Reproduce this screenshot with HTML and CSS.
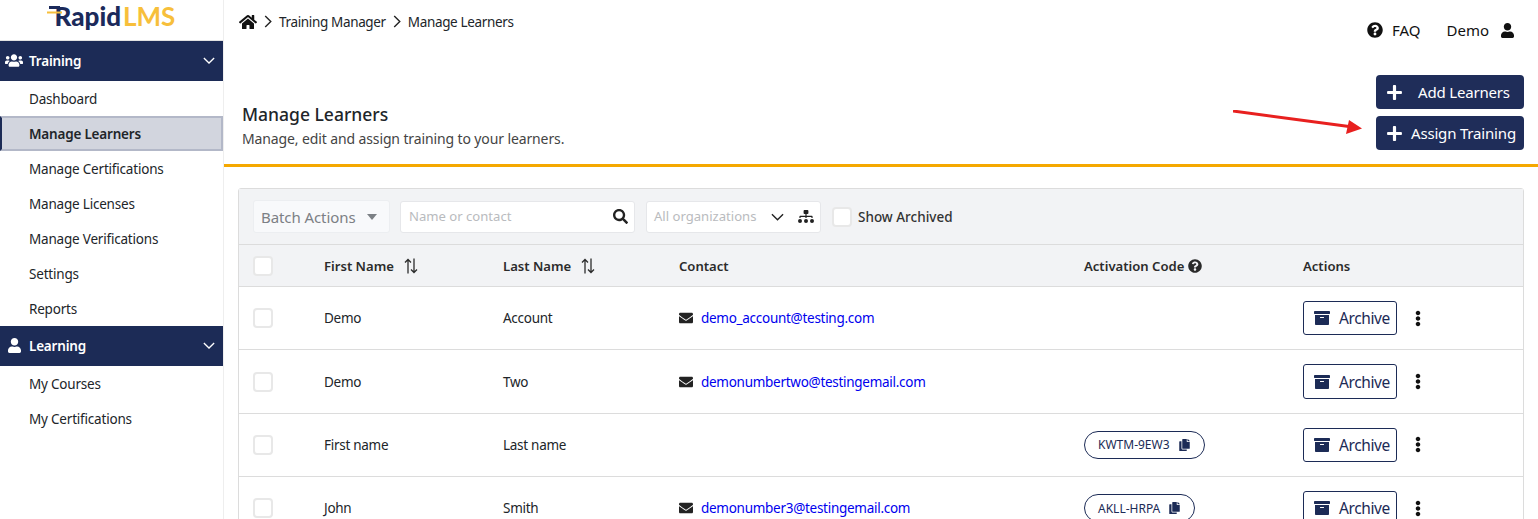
FILE: index.html
```html
<!DOCTYPE html>
<html lang="en">
<head>
<meta charset="utf-8">
<title>Manage Learners</title>
<link rel="stylesheet" href="styles.css">
</head>
<body>
<svg class="sprite" aria-hidden="true">
  <symbol id="i-home" viewBox="0 0 576 512"><path d="M280.37 148.26L96 300.11V464a16 16 0 0 0 16 16l112.06-.29a16 16 0 0 0 15.92-16V368a16 16 0 0 1 16-16h64a16 16 0 0 1 16 16v95.64a16 16 0 0 0 16 16.05L464 480a16 16 0 0 0 16-16V300L295.67 148.26a12.19 12.19 0 0 0-15.3 0zM571.6 251.47L488 182.56V44.05a12 12 0 0 0-12-12h-56a12 12 0 0 0-12 12v72.61L318.47 43a48 48 0 0 0-61 0L4.34 251.47a12 12 0 0 0-1.6 16.9l25.5 31A12 12 0 0 0 45.15 301l235.22-193.74a12.19 12.19 0 0 1 15.3 0L530.9 301a12 12 0 0 0 16.9-1.6l25.5-31a12 12 0 0 0-1.7-16.93z"/></symbol>
  <symbol id="i-user" viewBox="0 0 448 512"><path d="M224 256c70.7 0 128-57.3 128-128S294.7 0 224 0 96 57.3 96 128s57.3 128 128 128zm89.6 32h-16.7c-22.2 10.2-46.9 16-72.9 16s-50.6-5.8-72.9-16h-16.7C60.2 288 0 348.2 0 422.4V464c0 26.5 21.5 48 48 48h352c26.5 0 48-21.5 48-48v-41.6c0-74.2-60.2-134.4-134.4-134.4z"/></symbol>
  <symbol id="i-help" viewBox="0 0 512 512"><path d="M504 256c0 136.997-111.043 248-248 248S8 392.997 8 256C8 119.083 119.043 8 256 8s248 111.083 248 248zM262.655 90c-54.497 0-89.255 22.957-116.549 63.758-3.536 5.286-2.353 12.415 2.715 16.258l34.699 26.31c5.205 3.947 12.621 3.008 16.665-2.122 17.864-22.658 30.113-35.797 57.303-35.797 20.429 0 45.698 13.148 45.698 32.958 0 14.976-12.363 22.667-32.534 33.976C247.128 238.528 216 254.941 216 296v4c0 6.627 5.373 12 12 12h56c6.627 0 12-5.373 12-12v-1.333c0-28.462 83.186-29.647 83.186-106.667 0-58.002-60.165-102-116.531-102zM256 338c-25.365 0-46 20.635-46 46 0 25.364 20.635 46 46 46s46-20.636 46-46c0-25.365-20.635-46-46-46z"/></symbol>
  <symbol id="i-plus" viewBox="0 0 448 512"><path d="M416 208H272V64c0-17.67-14.33-32-32-32h-32c-17.67 0-32 14.33-32 32v144H32c-17.67 0-32 14.33-32 32v32c0 17.67 14.33 32 32 32h144v144c0 17.67 14.33 32 32 32h32c17.67 0 32-14.33 32-32V304h144c17.67 0 32-14.33 32-32v-32c0-17.67-14.33-32-32-32z"/></symbol>
  <symbol id="i-search" viewBox="0 0 512 512"><path d="M505 442.7L405.3 343c-4.5-4.5-10.6-7-17-7H372c27.6-35.3 44-79.7 44-128C416 93.1 322.9 0 208 0S0 93.1 0 208s93.1 208 208 208c48.3 0 92.7-16.4 128-44v16.3c0 6.4 2.5 12.5 7 17l99.7 99.7c9.4 9.4 24.6 9.4 33.9 0l28.3-28.3c9.4-9.4 9.4-24.6.1-34zM208 336c-70.7 0-128-57.2-128-128 0-70.7 57.2-128 128-128 70.7 0 128 57.2 128 128 0 70.7-57.2 128-128 128z"/></symbol>
  <symbol id="i-mail" viewBox="0 0 512 512"><path d="M502.3 190.8c3.9-3.1 9.7-.2 9.7 4.7V400c0 26.5-21.5 48-48 48H48c-26.5 0-48-21.5-48-48V195.6c0-5 5.7-7.8 9.7-4.7 22.4 17.4 52.1 39.5 154.1 113.6 21.1 15.4 56.7 47.8 92.2 47.6 35.7.3 72-32.8 92.3-47.6 102-74.1 131.6-96.3 154-113.7zM256 320c23.2.4 56.6-29.2 73.4-41.4 132.7-96.3 142.8-104.7 173.4-128.7 5.8-4.5 9.2-11.5 9.2-18.9v-19c0-26.5-21.5-48-48-48H48C21.5 64 0 85.5 0 112v19c0 7.4 3.4 14.3 9.2 18.9 30.6 23.9 40.7 32.4 173.4 128.7 16.8 12.2 50.2 41.8 73.4 41.4z"/></symbol>
  <symbol id="i-archive" viewBox="0 0 512 512"><path d="M32 448c0 17.7 14.3 32 32 32h384c17.7 0 32-14.3 32-32V160H32v288zm160-212c0-6.6 5.4-12 12-12h104c6.6 0 12 5.4 12 12v8c0 6.6-5.4 12-12 12H204c-6.6 0-12-5.4-12-12v-8zM480 32H32C14.3 32 0 46.3 0 64v48c0 8.8 7.2 16 16 16h480c8.8 0 16-7.2 16-16V64c0-17.7-14.3-32-32-32z"/></symbol>
  <symbol id="i-copy" viewBox="0 0 448 512"><path d="M320 448v40c0 13.255-10.745 24-24 24H24c-13.255 0-24-10.745-24-24V120c0-13.255 10.745-24 24-24h72v296c0 30.879 25.121 56 56 56h168zm0-344V0H152c-13.255 0-24 10.745-24 24v368c0 13.255 10.745 24 24 24h272c13.255 0 24-10.745 24-24V128H344c-13.2 0-24-10.8-24-24zm120.971-31.029L375.029 7.029A24 24 0 0 0 358.059 0H352v96h96v-6.059a24 24 0 0 0-7.029-16.97z"/></symbol>
  <symbol id="i-dots" viewBox="0 0 192 512"><path d="M96 184c39.8 0 72 32.2 72 72s-32.2 72-72 72-72-32.2-72-72 32.2-72 72-72zM24 80c0 39.8 32.2 72 72 72s72-32.2 72-72S135.800 8 96 8 24 40.200 24 80zm0 352c0 39.800 32.200 72 72 72s72-32.200 72-72-32.200-72-72-72-72 32.200-72 72z"/></symbol>
  <symbol id="i-users" viewBox="0 0 640 512"><path d="M96 224c35.300 0 64-28.700 64-64s-28.700-64-64-64-64 28.700-64 64 28.700 64 64 64zm448 0c35.300 0 64-28.700 64-64s-28.700-64-64-64-64 28.700-64 64 28.700 64 64 64zm32 32h-64c-17.600 0-33.500 7.100-45.100 18.600 40.300 22.100 68.900 62 75.100 109.400h66c17.700 0 32-14.300 32-32v-32c0-35.300-28.700-64-64-64zm-256 0c61.900 0 112-50.100 112-112S381.900 32 320 32 208 82.100 208 144s50.100 112 112 112zm76.800 32h-8.300c-20.800 10-43.900 16-68.500 16s-47.600-6-68.500-16h-8.300C179.600 288 128 339.600 128 403.200V432c0 26.500 21.500 48 48 48h288c26.500 0 48-21.500 48-48v-28.800c0-63.600-51.600-115.200-115.200-115.200zm-223.700-13.400C161.500 263.100 145.600 256 128 256H64c-35.300 0-64 28.700-64 64v32c0 17.700 14.300 32 32 32h65.900c6.300-47.400 34.900-87.300 75.200-109.400z"/></symbol>
  <symbol id="i-sitemap" viewBox="0 0 640 512"><path d="M80 352a80 80 0 1 0 0 160 80 80 0 0 0 0-160zm240 0a80 80 0 1 0 0 160 80 80 0 0 0 0-160zm240 0a80 80 0 1 0 0 160 80 80 0 0 0 0-160zM104 272h192v48h48v-48h192v48h48v-57.590c0-21.170-17.230-38.410-38.410-38.410H344v-64h40c17.670 0 32-14.330 32-32V32c0-17.670-14.330-32-32-32H256c-17.670 0-32 14.330-32 32v96c0 17.670 14.330 32 32 32h40v64H94.410C73.230 224 56 241.230 56 262.410V320h48z"/></symbol>
  <symbol id="i-down" viewBox="0 0 14 8"><path d="M1 1l6 6 6-6" fill="none" stroke="currentColor" stroke-width="1.500"/></symbol>
  <symbol id="i-right" viewBox="0 0 8 14"><path d="M1 1l6 6-6 6" fill="none" stroke="currentColor" stroke-width="1.500"/></symbol>
  <symbol id="i-sort" viewBox="0 0 14 16"><path d="M4 15.500V1.500M1 4.500l3-3 3 3M10 .5v14M7 11.500l3 3 3-3" fill="none" stroke="currentColor" stroke-width="1.300"/></symbol>
</svg>

<div class="app">
  <aside class="sidebar">
    <div class="logo">
      <svg class="logo-lines" viewBox="0 0 18 12"><path d="M3 2.500h11" stroke="#1b2a5b" stroke-width="3" fill="none"/><path d="M1 7.500h15" stroke="#f7bf3b" stroke-width="2" fill="none"/></svg>
      <span class="logo-rapid">Rapid</span><span class="logo-lms">LMS</span>
    </div>
    <div class="nav-head"><svg class="nav-icon-users"><use href="#i-users"/></svg><span class="nav-title">Training</span><svg class="nav-chev"><use href="#i-down"/></svg></div>
    <a class="nav-item">Dashboard</a>
    <a class="nav-item is-active">Manage Learners</a>
    <a class="nav-item">Manage Certifications</a>
    <a class="nav-item">Manage Licenses</a>
    <a class="nav-item">Manage Verifications</a>
    <a class="nav-item">Settings</a>
    <a class="nav-item">Reports</a>
    <div class="nav-head"><svg class="nav-icon-user"><use href="#i-user"/></svg><span class="nav-title">Learning</span><svg class="nav-chev"><use href="#i-down"/></svg></div>
    <a class="nav-item">My Courses</a>
    <a class="nav-item">My Certifications</a>
  </aside>

  <main class="main">
    <div class="top">
      <div class="top-left">
        <nav class="crumbs">
          <svg class="crumb-home"><use href="#i-home"/></svg>
          <svg class="crumb-sep"><use href="#i-right"/></svg>
          <span>Training Manager</span>
          <svg class="crumb-sep"><use href="#i-right"/></svg>
          <span>Manage Learners</span>
        </nav>
        <div class="page-head">
          <h1 class="page-title">Manage Learners</h1>
          <p class="page-sub">Manage, edit and assign training to your learners.</p>
        </div>
      </div>
      <div class="top-right">
        <div class="user-links">
          <span class="user-link"><svg class="ic-help"><use href="#i-help"/></svg>FAQ</span>
          <span class="user-link user-demo">Demo<svg class="ic-user"><use href="#i-user"/></svg></span>
        </div>
        <div class="head-btns">
          <button class="btn-primary btn-add"><svg class="ic-plus"><use href="#i-plus"/></svg>Add Learners</button>
          <button class="btn-primary btn-assign"><svg class="ic-plus"><use href="#i-plus"/></svg>Assign Training</button>
        </div>
      </div>
    </div>

    <svg class="arrow" viewBox="0 0 130 28"><path d="M0 1l116 15.500" stroke="#e8201f" stroke-width="3" fill="none"/><path d="M129 18.500L116 10l-3 14z" fill="#e8201f"/></svg>

    <section class="card">
      <div class="toolbar">
        <div class="batch">Batch Actions<span class="caret"></span></div>
        <div class="search"><span class="ph">Name or contact</span><svg class="ic-search"><use href="#i-search"/></svg></div>
        <div class="org"><span class="ph org-ph">All organizations</span><svg class="org-chev"><use href="#i-down"/></svg><svg class="ic-sitemap"><use href="#i-sitemap"/></svg></div>
        <label class="archived"><span class="check"></span>Show Archived</label>
      </div>

      <div class="row row-head">
        <div class="cell"><span class="check"></span></div>
        <div class="cell">First Name<svg class="ic-sort"><use href="#i-sort"/></svg></div>
        <div class="cell">Last Name<svg class="ic-sort"><use href="#i-sort"/></svg></div>
        <div class="cell">Contact</div>
        <div class="cell">Activation Code<svg class="ic-q"><use href="#i-help"/></svg></div>
        <div class="cell">Actions</div>
      </div>

      <div class="row">
        <div class="cell"><span class="check"></span></div>
        <div class="cell">Demo</div>
        <div class="cell">Account</div>
        <div class="cell"><svg class="ic-mail"><use href="#i-mail"/></svg><a class="mail">demo_account@testing.com</a></div>
        <div class="cell"></div>
        <div class="cell"><button class="btn-archive"><svg class="ic-archive"><use href="#i-archive"/></svg>Archive</button><svg class="ic-dots"><use href="#i-dots"/></svg></div>
      </div>
      <div class="row">
        <div class="cell"><span class="check"></span></div>
        <div class="cell">Demo</div>
        <div class="cell">Two</div>
        <div class="cell"><svg class="ic-mail"><use href="#i-mail"/></svg><a class="mail">demonumbertwo@testingemail.com</a></div>
        <div class="cell"></div>
        <div class="cell"><button class="btn-archive"><svg class="ic-archive"><use href="#i-archive"/></svg>Archive</button><svg class="ic-dots"><use href="#i-dots"/></svg></div>
      </div>
      <div class="row">
        <div class="cell"><span class="check"></span></div>
        <div class="cell">First name</div>
        <div class="cell">Last name</div>
        <div class="cell"></div>
        <div class="cell"><span class="code">KWTM-9EW3<svg class="ic-copy"><use href="#i-copy"/></svg></span></div>
        <div class="cell"><button class="btn-archive"><svg class="ic-archive"><use href="#i-archive"/></svg>Archive</button><svg class="ic-dots"><use href="#i-dots"/></svg></div>
      </div>
      <div class="row">
        <div class="cell"><span class="check"></span></div>
        <div class="cell">John</div>
        <div class="cell">Smith</div>
        <div class="cell"><svg class="ic-mail"><use href="#i-mail"/></svg><a class="mail">demonumber3@testingemail.com</a></div>
        <div class="cell"><span class="code">AKLL-HRPA<svg class="ic-copy"><use href="#i-copy"/></svg></span></div>
        <div class="cell"><button class="btn-archive"><svg class="ic-archive"><use href="#i-archive"/></svg>Archive</button><svg class="ic-dots"><use href="#i-dots"/></svg></div>
      </div>
    </section>
  </main>
</div>
</body>
</html>
```
FILE: styles.css
```css
* { box-sizing: border-box; }
html, body { margin: 0; height: 100%; overflow: hidden; }
body { font-family: "Noto Sans", "Open Sans", sans-serif; font-size: 14px; color: #212529; background: #fff; }
.sprite { display: none; }
svg { fill: currentColor; flex: none; }
.app { display: flex; height: 519px; overflow: hidden; }

.sidebar { width: 224px; flex: none; border-right: 1px solid #eeeeee; }
.logo { height: 41px; display: flex; align-items: center; justify-content: center; padding: 0 0 9px 7px; border-bottom: 1px solid #e2e2e2; font-family: "Lato", sans-serif; font-size: 26px; line-height: 30px; font-weight: 900; position: relative; overflow: hidden; }
.logo-lines { position: absolute; left: 46px; top: 5px; width: 18px; height: 12px; }
.logo-rapid { color: #1b2a5b; }
.logo-lms { color: #f7bf3b; font-weight: 700; margin-left: 2px; }
.nav-head { height: 40px; background: #1c2b56; color: #fff; display: flex; align-items: center; font-weight: 600; font-size: 13.5px; letter-spacing: -.2px; padding-bottom: 1px; }
.nav-icon-users { width: 18px; height: 15px; margin-left: 5px; margin-right: 6px; }
.nav-icon-user { width: 13px; height: 15px; margin-left: 8px; margin-right: 8px; }
.nav-title { flex: 1; }
.nav-chev { width: 12px; height: 7px; margin-right: 8px; }
.nav-item { display: flex; align-items: center; height: 35px; padding-left: 29px; font-size: 13.5px; letter-spacing: -.2px; color: #212529; }
.is-active { background: #d2d5de; font-weight: 600; padding-left: 27px; border: 2px solid #b3b8c8; border-left-color: #1c2b56; }

.main { flex: 1; min-width: 0; position: relative; }
.top { display: flex; justify-content: space-between; height: 167px; border-bottom: 3px solid #f5a800; padding-right: 14px; }
.top-left { padding-left: 15px; display: flex; flex-direction: column; }
.crumbs { display: flex; align-items: center; height: 44px; font-size: 13.5px; letter-spacing: -.35px; gap: 7px; padding-bottom: 1px; color: #212529; }
.crumb-home { width: 18px; height: 16px; color: #111; }
.crumb-sep { width: 8px; height: 13px; color: #222; }
.page-head { margin-top: 58px; padding-left: 3px; }
.page-title { margin: 0; font-size: 17.500px; line-height: 24px; font-weight: 500; color: #212529; }
.page-sub { margin: 3px 0 0; font-size: 14px; letter-spacing: -.12px; line-height: 20px; color: #444; }
.top-right { display: flex; flex-direction: column; align-items: flex-end; }
.user-links { display: flex; align-items: center; height: 60px; padding-right: 10px; gap: 26px; font-size: 15px; color: #111; }
.user-link { display: flex; align-items: center; }
.ic-help { width: 16px; height: 16px; margin-right: 9px; color: #111; }
.ic-user { width: 13px; height: 15px; margin-left: 12px; color: #111; }
.head-btns { margin-top: 15px; display: flex; flex-direction: column; gap: 7px; }
.btn-primary { width: 148px; height: 34px; background: #1f2d59; color: #fff; border: 0; border-radius: 4px; font: inherit; font-size: 15px; letter-spacing: -.18px; display: flex; align-items: center; padding: 0 0 0 11px; }
.ic-plus { width: 15px; height: 17px; }
.btn-add .ic-plus { margin-right: 16px; }
.btn-assign .ic-plus { margin-right: 9px; }

.arrow { position: absolute; left: 1009px; top: 110px; width: 130px; height: 28px; }

.card { margin: 21px 14px 0 14px; border: 1px solid #dcdcdc; border-radius: 3px 3px 0 0; background: #fff; }
.toolbar { height: 56px; background: #f2f3f5; display: flex; align-items: center; padding-left: 14px; border-bottom: 1px solid #dcdcdc; }
.batch { width: 137px; height: 33px; background: #f8f9fb; border: 1px solid #eceef1; border-radius: 3px; color: #7c8085; font-size: 15px; letter-spacing: -.08px; display: flex; align-items: center; padding-left: 7px; margin-right: 10px; }
.caret { width: 0; height: 0; border: 5.500px solid transparent; border-top: 6px solid #7c8085; border-bottom: 0; margin-left: 11px; }
.search { width: 235px; height: 32px; background: #fff; border: 1px solid #e6e7ea; border-radius: 3px; display: flex; align-items: center; justify-content: space-between; padding: 0 6px 0 8px; margin-right: 11px; }
.org { width: 175px; height: 32px; background: #fff; border: 1px solid #e6e7ea; border-radius: 3px; display: flex; align-items: center; padding: 0 6px 0 7px; margin-right: 11px; }
.ph { color: #b9bbbe; font-size: 13.100px; white-space: nowrap; margin-top: -2px; }
.org-ph { flex: 1; }
.ic-search { width: 15px; height: 15px; color: #222; }
.org-chev { width: 13px; height: 8px; color: #222; }
.ic-sitemap { width: 16px; height: 13px; margin-left: 14px; color: #222; }
.archived { display: flex; align-items: center; font-weight: 500; font-size: 13.500px; color: #333; }
.archived .check { margin-right: 6px; }
.check { display: block; width: 20px; height: 20px; background: #fff; border: 2px solid #e8e8e8; border-radius: 4px; }

.row { display: grid; grid-template-columns: 85px 179px 176px 405px 219px 1fr; height: 63.350px; border-bottom: 1px solid #dcdcdc; }
.row-head { height: 42px; background: #f2f3f5; font-weight: 600; color: #2b2b2b; }
.cell { display: flex; align-items: center; min-width: 0; font-size: 13.500px; letter-spacing: -.28px; }
.cell:first-child { padding-left: 14px; }
.row-head .cell { font-size: 13.100px; letter-spacing: 0; }
.ic-sort { width: 14px; height: 16px; margin-left: 10px; }
.ic-q { width: 14px; height: 14px; margin-left: 4px; color: #2a2a2a; }
.ic-mail { width: 14px; height: 14px; margin-right: 8px; color: #222; }
.mail { color: #0000ee; }
.code { display: inline-flex; align-items: center; height: 28px; padding: 0 14px 0 13px; border: 1px solid #1c2b56; border-radius: 14px; color: #1c2b56; font-size: 12px; letter-spacing: 0; }
.ic-copy { width: 11px; height: 12px; margin-left: 9px; }
.btn-archive { width: 94px; height: 34.400px; border: 1px solid #1c2b56; border-radius: 3px; background: #fff; color: #1c2b56; font: inherit; font-size: 15.500px; letter-spacing: -.4px; display: flex; align-items: center; padding: 0 0 0 10px; }
.ic-archive { width: 16px; height: 16px; margin-right: 9px; }
.ic-dots { width: 6px; height: 17px; margin-left: 18px; color: #111; }
```
